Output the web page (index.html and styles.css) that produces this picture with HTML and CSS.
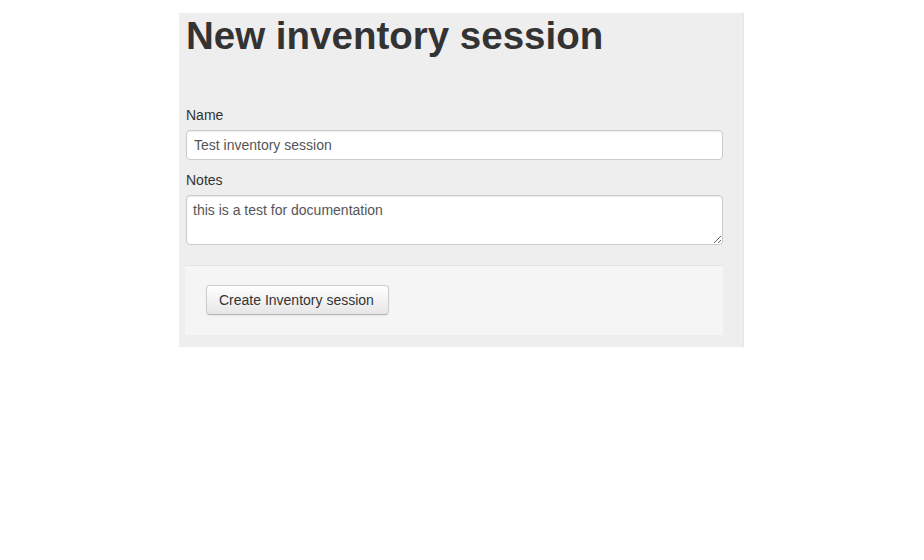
FILE: index.html
```html
<!DOCTYPE html>
<html>
<head>
<meta charset="utf-8">
<link rel="stylesheet" href="styles.css">
</head>
<body>
<div class="panel">
  <h1 class="title">New inventory session</h1>
  <form class="form">
    <div class="field">
      <label class="label">Name</label>
      <input class="input" type="text" value="Test inventory session">
    </div>
    <div class="field">
      <label class="label">Notes</label>
      <textarea class="textarea">this is a test for documentation</textarea>
    </div>
    <div class="actions">
      <button type="button" class="btn">Create Inventory session</button>
    </div>
  </form>
</div>
</body>
</html>
```
FILE: styles.css
```css
html, body {
  margin: 0;
  padding: 0;
  background: #fff;
}
body {
  font-family: "Liberation Sans", Arial, Helvetica, sans-serif;
  font-size: 14px;
  line-height: 20px;
  color: #333;
}
.panel {
  margin: 13px 0 0 179px;
  width: 551px;
  padding: 3px 6px 12px 7px;
  background: #eeeeee;
  border-right: 1px solid #e6e6e6;
  box-sizing: content-box;
}
.title {
  margin: 0 0 49px 0;
  font-size: 38.5px;
  line-height: 40px;
  font-weight: bold;
  color: #333;
}
.form {
  margin: 0;
}
.field {
  display: flex;
  flex-direction: column;
  margin-bottom: 10px;
}
.label {
  display: block;
  margin-bottom: 5px;
  line-height: 20px;
  color: #333;
}
.input, .textarea {
  box-sizing: border-box;
  width: 537px;
  margin: 0;
  font-family: "Liberation Sans", Arial, Helvetica, sans-serif;
  font-size: 14px;
  line-height: 20px;
  color: #555;
  background: #fff;
  border: 1px solid #ccc;
  border-radius: 4px;
  box-shadow: inset 0 1px 1px rgba(0,0,0,0.075);
  padding: 4px 7px;
}
.input {
  height: 30px;
}
.textarea {
  height: 50px;
  padding: 4px 6px;
  resize: vertical;
  display: block;
}
.actions {
  margin: 20px 0 0 -1px;
  width: 497px;
  padding: 19px 20px 20px 21px;
  background: #f5f5f5;
  border-top: 1px solid #e5e5e5;
}
.btn {
  height: 30px;
  padding: 4px 14px 4px 12px;
  font-family: "Liberation Sans", Arial, Helvetica, sans-serif;
  font-size: 14px;
  line-height: 20px;
  color: #333;
  background: linear-gradient(to bottom, #ffffff, #e6e6e6);
  border: 1px solid #cccccc;
  border-bottom-color: #b3b3b3;
  border-radius: 4px;
  box-shadow: inset 0 1px 0 rgba(255,255,255,0.2), 0 1px 2px rgba(0,0,0,0.05);
  cursor: pointer;
}
```
